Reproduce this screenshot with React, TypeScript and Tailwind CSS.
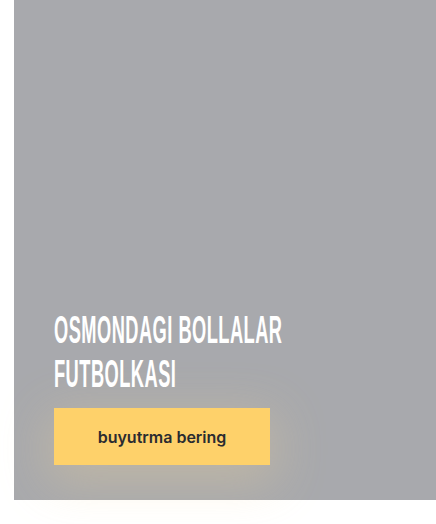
export default function App() {
  return (
    <div className="w-[436px] h-[524px] bg-white">
      <div className="ml-[14px] w-[422px] h-[500px] bg-[#a8a9ad] flex flex-col justify-end pl-[40px] pb-[35px]">
        <h1
          className="origin-left scale-x-[0.48] w-[600px] whitespace-nowrap text-white text-[38px] leading-[44px] tracking-[1px] font-bold uppercase"
          style={{ fontFamily: '"Liberation Sans Narrow", "Liberation Sans", sans-serif' }}
        >
          Osmondagi bollalar
          <br />
          futbolkasi
        </h1>
        <button className="mt-[12px] w-[216px] h-[57px] bg-[#fed16a] text-[#2a2b30] text-[16px] font-semibold shadow-[0_12px_50px_6px_rgba(245,215,150,0.3)] font-['Inter',sans-serif]">
          buyutrma bering
        </button>
      </div>
    </div>
  );
}
